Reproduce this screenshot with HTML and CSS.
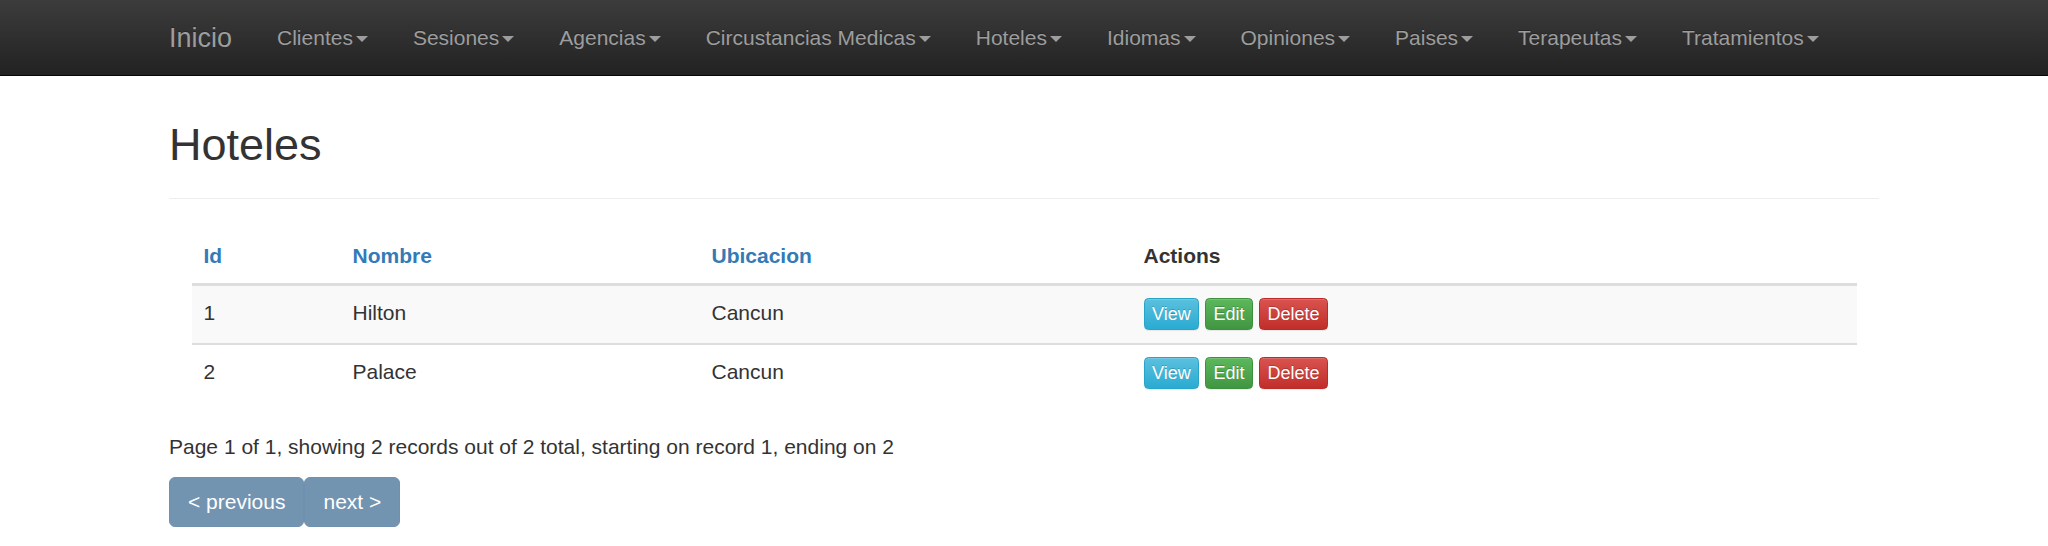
FILE: index.html
```html
<!DOCTYPE html>
<html lang="es">
<head>
<meta charset="utf-8">
<title>Hoteles</title>
<link rel="stylesheet" href="styles.css">
</head>
<body>
<nav class="navbar">
  <div class="container navbar-inner">
    <a class="brand" href="#">Inicio</a>
    <ul class="nav">
      <li><a href="#">Clientes<span class="caret"></span></a></li>
      <li><a href="#">Sesiones<span class="caret"></span></a></li>
      <li><a href="#">Agencias<span class="caret"></span></a></li>
      <li><a href="#">Circustancias Medicas<span class="caret"></span></a></li>
      <li><a href="#">Hoteles<span class="caret"></span></a></li>
      <li><a href="#">Idiomas<span class="caret"></span></a></li>
      <li><a href="#">Opiniones<span class="caret"></span></a></li>
      <li><a href="#">Paises<span class="caret"></span></a></li>
      <li><a href="#">Terapeutas<span class="caret"></span></a></li>
      <li><a href="#">Tratamientos<span class="caret"></span></a></li>
    </ul>
  </div>
</nav>
<div class="container">
  <div class="page-header">
    <h2>Hoteles</h2>
  </div>
  <div class="table-wrap">
    <table class="table">
      <colgroup>
        <col class="col-id">
        <col class="col-name">
        <col class="col-loc">
        <col class="col-act">
      </colgroup>
      <thead>
        <tr>
          <th><a href="#">Id</a></th>
          <th><a href="#">Nombre</a></th>
          <th><a href="#">Ubicacion</a></th>
          <th>Actions</th>
        </tr>
      </thead>
      <tbody>
        <tr class="odd">
          <td>1</td>
          <td>Hilton</td>
          <td>Cancun</td>
          <td><a class="btn-xs btn-info" href="#">View</a> <a class="btn-xs btn-success" href="#">Edit</a> <a class="btn-xs btn-danger" href="#">Delete</a></td>
        </tr>
        <tr>
          <td>2</td>
          <td>Palace</td>
          <td>Cancun</td>
          <td><a class="btn-xs btn-info" href="#">View</a> <a class="btn-xs btn-success" href="#">Edit</a> <a class="btn-xs btn-danger" href="#">Delete</a></td>
        </tr>
      </tbody>
    </table>
  </div>
  <p class="paging-info">Page 1 of 1, showing 2 records out of 2 total, starting on record 1, ending on 2</p>
  <div class="paging">
    <span class="page-btn">&lt; previous</span><span class="page-btn">next &gt;</span>
  </div>
</div>
</body>
</html>
```
FILE: styles.css
```css
html, body {
  margin: 0;
  padding: 0;
}
body {
  font-family: "Liberation Sans", Arial, Helvetica, sans-serif;
  font-size: 21px;
  line-height: 30px;
  color: #333;
  background: #fff;
}
a {
  text-decoration: none;
}
.container {
  width: 1755px;
  margin: 0 auto;
  padding: 0 22.5px;
  box-sizing: border-box;
}

/* Navbar */
.navbar {
  height: 75px;
  background-color: #222;
  background-image: linear-gradient(to bottom, #3c3c3c 0, #222 100%);
  border-bottom: 1px solid #080808;
}
.navbar-inner {
  display: flex;
  align-items: flex-start;
}
.brand {
  display: block;
  margin-left: -22.5px;
  padding: 22.5px;
  font-size: 27px;
  line-height: 30px;
  height: 30px;
  color: #9d9d9d;
  text-shadow: 0 -1px 0 rgba(0, 0, 0, .25);
}
.nav {
  display: flex;
  list-style: none;
  margin: 0;
  padding: 0;
}
.nav a {
  display: block;
  padding: 22.5px;
  line-height: 30px;
  color: #9d9d9d;
  text-shadow: 0 -1px 0 rgba(0, 0, 0, .25);
}
.caret {
  display: inline-block;
  width: 0;
  height: 0;
  margin-left: 3px;
  vertical-align: middle;
  border-top: 6px solid #9d9d9d;
  border-left: 6px solid transparent;
  border-right: 6px solid transparent;
}

/* Header */
.page-header {
  margin: 44px 0 30px;
  padding-bottom: 13.5px;
  border-bottom: 1.5px solid #eee;
}
.page-header h2 {
  margin: 0 0 15px;
  font-size: 45px;
  line-height: 1.1;
  font-weight: 500;
  color: #333;
}

/* Table */
.table-wrap {
  padding: 0 22.5px;
}
.table {
  width: 100%;
  table-layout: fixed;
  border-collapse: collapse;
  border-spacing: 0;
  margin-bottom: 30px;
}
.col-id { width: 149px; }
.col-name { width: 359px; }
.col-loc { width: 432px; }
.table th {
  text-align: left;
  font-weight: bold;
  padding: 12px;
  line-height: 30px;
  vertical-align: bottom;
  border-bottom: 3px solid #ddd;
}
.table th a {
  color: #337ab7;
}
.table td {
  padding: 12px 12px 12.5px;
  line-height: 30px;
  vertical-align: top;
  border-top: 2px solid #ddd;
}
.table tbody tr:first-child td {
  border-top: 0;
}
.table tr.odd td {
  background-color: #f9f9f9;
}

/* Action buttons */
.btn-xs {
  display: inline-block;
  font-size: 18px;
  line-height: 27px;
  padding: 1.5px 7.5px;
  border: 1.5px solid transparent;
  border-radius: 4.5px;
  color: #fff;
  text-shadow: 0 -1px 0 rgba(0, 0, 0, .2);
  box-shadow: inset 0 1px 0 rgba(255, 255, 255, .15), 0 1px 1px rgba(0, 0, 0, .075);
  vertical-align: middle;
}
.btn-info {
  background-image: linear-gradient(to bottom, #5bc0de 0, #2aabd2 100%);
  border-color: #28a4c9;
}
.btn-success {
  background-image: linear-gradient(to bottom, #5cb85c 0, #419641 100%);
  border-color: #3e8f3e;
}
.btn-danger {
  background-image: linear-gradient(to bottom, #d9534f 0, #c12e2a 100%);
  border-color: #b92c28;
}

/* Paging */
.paging-info {
  margin: 0 0 15px;
}
.paging {
  display: flex;
}
.page-btn {
  display: block;
  padding: 9px 18px;
  line-height: 30px;
  font-size: 21px;
  color: #fff;
  background-color: #7294b1;
  border: 1.5px solid #6f90ae;
  border-radius: 6px;
}
```
